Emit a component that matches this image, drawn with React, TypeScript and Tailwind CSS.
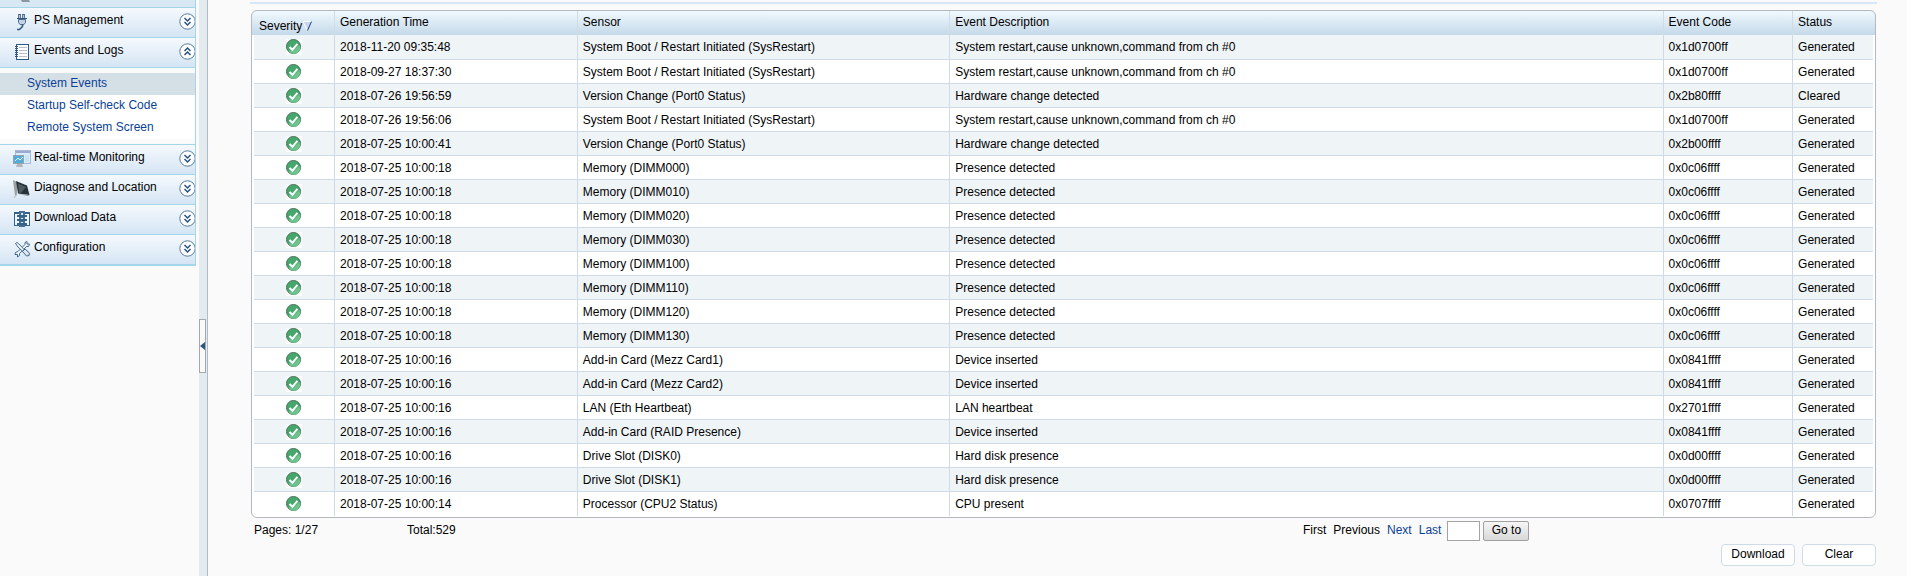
import React from "react";

type EventRow = [time: string, sensor: string, description: string, code: string, status: string];

const events: EventRow[] = [
  ["2018-11-20 09:35:48", "System Boot / Restart Initiated (SysRestart)", "System restart,cause unknown,command from ch #0", "0x1d0700ff", "Generated"],
  ["2018-09-27 18:37:30", "System Boot / Restart Initiated (SysRestart)", "System restart,cause unknown,command from ch #0", "0x1d0700ff", "Generated"],
  ["2018-07-26 19:56:59", "Version Change (Port0 Status)", "Hardware change detected", "0x2b80ffff", "Cleared"],
  ["2018-07-26 19:56:06", "System Boot / Restart Initiated (SysRestart)", "System restart,cause unknown,command from ch #0", "0x1d0700ff", "Generated"],
  ["2018-07-25 10:00:41", "Version Change (Port0 Status)", "Hardware change detected", "0x2b00ffff", "Generated"],
  ["2018-07-25 10:00:18", "Memory (DIMM000)", "Presence detected", "0x0c06ffff", "Generated"],
  ["2018-07-25 10:00:18", "Memory (DIMM010)", "Presence detected", "0x0c06ffff", "Generated"],
  ["2018-07-25 10:00:18", "Memory (DIMM020)", "Presence detected", "0x0c06ffff", "Generated"],
  ["2018-07-25 10:00:18", "Memory (DIMM030)", "Presence detected", "0x0c06ffff", "Generated"],
  ["2018-07-25 10:00:18", "Memory (DIMM100)", "Presence detected", "0x0c06ffff", "Generated"],
  ["2018-07-25 10:00:18", "Memory (DIMM110)", "Presence detected", "0x0c06ffff", "Generated"],
  ["2018-07-25 10:00:18", "Memory (DIMM120)", "Presence detected", "0x0c06ffff", "Generated"],
  ["2018-07-25 10:00:18", "Memory (DIMM130)", "Presence detected", "0x0c06ffff", "Generated"],
  ["2018-07-25 10:00:16", "Add-in Card (Mezz Card1)", "Device inserted", "0x0841ffff", "Generated"],
  ["2018-07-25 10:00:16", "Add-in Card (Mezz Card2)", "Device inserted", "0x0841ffff", "Generated"],
  ["2018-07-25 10:00:16", "LAN (Eth Heartbeat)", "LAN heartbeat", "0x2701ffff", "Generated"],
  ["2018-07-25 10:00:16", "Add-in Card (RAID Presence)", "Device inserted", "0x0841ffff", "Generated"],
  ["2018-07-25 10:00:16", "Drive Slot (DISK0)", "Hard disk presence", "0x0d00ffff", "Generated"],
  ["2018-07-25 10:00:16", "Drive Slot (DISK1)", "Hard disk presence", "0x0d00ffff", "Generated"],
  ["2018-07-25 10:00:14", "Processor (CPU2 Status)", "CPU present", "0x0707ffff", "Generated"],
];

function PlugIcon() {
  return (
    <svg width="18" height="18" viewBox="0 0 18 18" fill="none" aria-hidden="true">
      <path d="M6.500 1v5M10.500 1v5" stroke="#35597d" strokeWidth="2.600" />
      <path d="M6.500 2v3M10.500 2v3" stroke="#dbe6f0" strokeWidth="0.800" />
      <path d="M4 5.500h10" stroke="#35597d" />
      <path d="M5.500 6.500h7v3l-1.500 2h-4l-1.500-2z" fill="#c3d2e0" stroke="#4a6d8f" />
      <path d="M9.500 12v1.500l-1.500 1.500-1.500 1.500h-2.500" stroke="#35597d" strokeWidth="1.600" />
    </svg>
  );
}

function NotebookIcon() {
  return (
    <svg width="18" height="18" viewBox="0 0 18 18" fill="none" aria-hidden="true">
      <rect x="3.500" y="1.500" width="12" height="15" fill="#fff" stroke="#2d5a85" />
      <path d="M6 4.500h8M6 7.500h8M6 10.500h8M6 13.500h8" stroke="#b5bfc9" />
      <path d="M2 3.500h3M2 5.500h3M2 7.500h3M2 9.500h3M2 11.500h3M2 13.500h3" stroke="#35597d" />
    </svg>
  );
}

function MonitorIcon() {
  return (
    <svg width="18" height="18" viewBox="0 0 18 18" fill="none" aria-hidden="true">
      <rect x="2.500" y="0.500" width="15" height="13" fill="#d9ecfa" stroke="#a9b9d6" />
      <path d="M2 1.500h16M3 2.500h14" stroke="#9ba8d0" />
      <path d="M12 5h4v7h-4z" fill="#c6e4f8" />
      <rect x="0.500" y="5.500" width="10" height="8" fill="#51acd9" stroke="#9aa1a8" />
      <path d="M2 11l3-3 2 2 3-3" stroke="#d8f4ff" />
      <path d="M4 14h5l1 3h-7z" fill="#b2b6ba" />
    </svg>
  );
}

function ScreenIcon() {
  return (
    <svg width="18" height="18" viewBox="0 0 18 18" fill="none" aria-hidden="true">
      <path d="M0 0l4 2v13l-2 1z" fill="#9da3a5" />
      <path d="M3 1l11 4.500 2.500 9.500-11.500-1.500z" fill="#273338" />
      <path d="M5 3.500l8 3.500-5 6-2-0.500z" fill="#4a5c61" />
      <path d="M5 14l11 1v1h-2z" fill="#a4aaad" />
      <path d="M4 14l-3 4" stroke="#b4b8ba" />
    </svg>
  );
}

function DownloadIcon() {
  return (
    <svg width="18" height="18" viewBox="0 0 18 18" fill="none" aria-hidden="true">
      <rect x="1.500" y="2.500" width="15" height="13" fill="#eef5fb" stroke="#36618b" />
      <path d="M1 3h16" stroke="#36618b" strokeWidth="2" />
      <path d="M6 1h6v16h-6z" fill="#456e95" />
      <path d="M4 6h10M4 10h10M4 14h10" stroke="#36618b" strokeWidth="2" />
      <path d="M8 3h2v2h-2zM8 8h2v1h-2zM8 12h2v1h-2z" fill="#d6e5f1" />
    </svg>
  );
}

function ToolsIcon() {
  return (
    <svg width="18" height="18" viewBox="0 0 18 18" fill="none" aria-hidden="true">
      <path
        d="M2.500 12.500l2.500-1 7-7v-2l2-1v2.500h2.500l-1 2.500h-2l-7 7v2l-2 1.500v-2.500h-2.500z"
        fill="#f2f7fb"
        stroke="#3f688f"
      />
      <path d="M2.500 3.500l1.500-1 3 2.500 4 4.500-1.500 1.500-4.500-4z" fill="#fff" stroke="#3f688f" />
      <path d="M9.500 11.500l2.500-2.500 4.500 4-0.500 2.500-2.500 0.500z" fill="#dde5ec" stroke="#3f688f" />
    </svg>
  );
}

function ExpandIcon({ open = false }: { open?: boolean }) {
  return (
    <svg width="16" height="17" viewBox="0 0 16 17" fill="none" className="shrink-0" aria-hidden="true">
      <circle cx="8.500" cy="8.500" r="7.700" fill="#fff" stroke="#54799a" />
      {open ? (
        <path d="M5.500 8l3-3 3 3M5.500 12l3-3 3 3" stroke="#26527c" strokeWidth="1.500" />
      ) : (
        <path d="M5.500 5l3 3 3-3M5.500 9l3 3 3-3" stroke="#26527c" strokeWidth="1.500" />
      )}
    </svg>
  );
}

function OkIcon() {
  return (
    <svg width="16" height="16" viewBox="0 0 16 16" fill="none" className="mx-auto block" role="img" aria-label="Normal">
      <rect width="16" height="16" fill="#fff" fillOpacity="0.600" />
      <circle cx="7.500" cy="7.500" r="7" fill="#46a76c" stroke="#47705a" />
      <path d="M2.500 11.500c4 0 8-2 11-5.500a6 6 0 0 1-11 5.500z" fill="#6cc48d" />
      <path d="M3.500 8l2.800 2.800 5.200-6" stroke="#fff" strokeWidth="2" />
    </svg>
  );
}

function SortIcon() {
  return (
    <svg width="10" height="10" viewBox="0 0 10 10" fill="none" aria-hidden="true">
      <path d="M0 0h9l-4 9z" fill="#c9d6f0" />
      <path d="M0 0.500h9M0 0.500l4.500 9" stroke="#fff" />
      <path d="M8.500 0.500l-4 9" stroke="#1e3a8a" />
    </svg>
  );
}

function MenuItem({ icon, label, open = false }: { icon: React.ReactNode; label: string; open?: boolean }) {
  return (
    <button
      type="button"
      aria-expanded={open}
      className="flex h-[30px] w-full items-center border-t border-[#a2d6e8] bg-linear-to-b from-[#f5f9fd] to-[#d5e5f4] pb-[2px] pl-[13px] text-left"
    >
      {icon}
      <span className="flex-1 pb-1 pl-[3px]">{label}</span>
      <ExpandIcon open={open} />
    </button>
  );
}

function Sidebar() {
  const links = ["System Events", "Startup Self-check Code", "Remote System Screen"];
  return (
    <nav className="w-[196px] shrink-0 self-start border-r border-b-2 border-[#a2d6e8]">
      <div className="flex h-[7px] items-start bg-[#d8e7f4] pl-[21px]">
        <svg width="9" height="2" aria-hidden="true">
          <path d="M0 0h8l1 2h-8z" fill="#8d969e" />
        </svg>
      </div>
      <MenuItem icon={<PlugIcon />} label="PS Management" />
      <MenuItem icon={<NotebookIcon />} label="Events and Logs" open />
      <ul className="border-t border-[#a2d6e8] py-[5px]">
        {links.map((label, i) => (
          <li key={label}>
            <a
              href="#"
              className={
                i === 0
                  ? "block h-[22px] bg-[#d5dfe6] pl-[27px] leading-5 text-[#0b3f96]"
                  : "block h-[22px] bg-white pl-[27px] leading-5 text-[#0b3f96]"
              }
            >
              {label}
            </a>
          </li>
        ))}
      </ul>
      <MenuItem icon={<MonitorIcon />} label="Real-time Monitoring" />
      <MenuItem icon={<ScreenIcon />} label="Diagnose and Location" />
      <MenuItem icon={<DownloadIcon />} label="Download Data" />
      <MenuItem icon={<ToolsIcon />} label="Configuration" />
    </nav>
  );
}

function Splitter() {
  return (
    <div className="ml-[3px] flex w-[9px] shrink-0 flex-col border-r border-[#aebdcb] bg-[#e3ebee] pt-[319px]">
      <button
        type="button"
        aria-label="Collapse menu"
        className="flex h-[54px] w-[7px] items-center justify-center border border-[#a3a8ac] bg-[#fafafa]"
      >
        <svg width="5" height="8" viewBox="0 0 5 8" className="shrink-0" aria-hidden="true">
          <path d="M5 0v8L0 4z" fill="#2b567f" />
        </svg>
      </button>
    </div>
  );
}

function EventTable() {
  const head = "border-l border-[#d0dbe6] pb-[2px] pl-[5px] text-left font-normal";
  const cell = "border-l border-[#cfdae6] pl-[5px]";
  return (
    <div className="overflow-hidden rounded-md border border-[#b5b9bd] bg-white bg-linear-to-b from-[#f0f9ff] to-[#c5d9e9] bg-size-[100%_24px] bg-no-repeat px-[2px] pb-px">
      <table className="w-full table-fixed border-separate border-spacing-0">
        <colgroup>
          <col className="w-20" />
          <col className="w-[15%]" />
          <col className="w-[23%]" />
          <col />
          <col className="w-[8%]" />
          <col className="w-[5%]" />
        </colgroup>
        <thead>
          <tr className="h-6">
            <th scope="col" className="pt-[5px] pl-[5px] text-left font-normal">
              <span className="flex items-center gap-px">
                Severity
                <SortIcon />
              </span>
            </th>
            <th scope="col" className={head}>Generation Time</th>
            <th scope="col" className={head}>Sensor</th>
            <th scope="col" className={head}>Event Description</th>
            <th scope="col" className={head}>Event Code</th>
            <th scope="col" className={head}>Status</th>
          </tr>
        </thead>
        <tbody>
          {events.map((row, i) => (
            <tr
              key={i}
              className="h-6 first:h-[25px] odd:bg-[#eff4f7] even:bg-white [&>td]:border-b [&>td]:border-b-[#cfdae6] last:[&>td]:border-b-0"
            >
              <td>
                <OkIcon />
              </td>
              {row.map((value, j) => (
                <td key={j} className={cell}>{value}</td>
              ))}
            </tr>
          ))}
        </tbody>
      </table>
    </div>
  );
}

function Pager() {
  return (
    <div className="flex items-center pt-[3px] pl-[3px]">
      <span className="w-[153px] pb-[2px]">Pages: 1/27</span>
      <span className="flex-1 pb-[2px]">Total:529</span>
      <div className="flex w-[573px] items-center">
        <div className="flex gap-[7px] pr-[6px] pb-[2px]">
          <span>First</span>
          <span>Previous</span>
          <a href="#" className="text-[#0b3f96]">Next</a>
          <a href="#" className="text-[#0b3f96]">Last</a>
        </div>
        <input type="text" aria-label="Page number" className="h-5 w-[33px] border border-[#a4a4a4] bg-white px-1" />
        <button
          type="button"
          className="ml-[3px] h-5 w-[46px] rounded-xs border border-[#a0a0a0] bg-linear-to-b from-[#f6f6f6] to-[#d8d8d8] pb-[2px] leading-4"
        >
          Go to
        </button>
      </div>
    </div>
  );
}

export default function App() {
  const action = "h-[22px] w-[74px] rounded border border-[#cfdbe9] bg-white pb-[2px] leading-4";
  return (
    <div className="flex min-h-screen bg-[#fafafa] font-['Liberation_Sans',Arial,sans-serif] text-xs text-black">
      <Sidebar />
      <Splitter />
      <main className="min-w-0 flex-1 pt-[2px] pr-[30px] pl-[42px]">
        <hr className="mb-[6px] border-t-2 border-[#d7e7f6]" />
        <div className="pr-px pl-px">
          <EventTable />
          <Pager />
          <div className="flex justify-end gap-[7px] pt-[3px]">
            <button type="button" className={action}>Download</button>
            <button type="button" className={action}>Clear</button>
          </div>
        </div>
      </main>
    </div>
  );
}
